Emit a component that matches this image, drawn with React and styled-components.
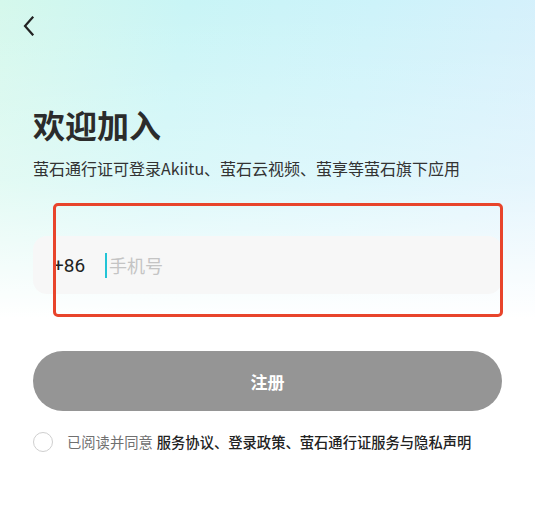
import React, { useState } from 'react';
import styled, { createGlobalStyle } from 'styled-components';

const GlobalStyle = createGlobalStyle`
  html, body {
    margin: 0;
    padding: 0;
    background: #ffffff;
  }
  body {
    font-family: "Noto Sans CJK SC", "Noto Sans", sans-serif;
  }
`;

const Page = styled.div`
  position: relative;
  width: 535px;
  height: 514px;
  overflow: hidden;
  background:
    linear-gradient(180deg, rgba(255, 255, 255, 0) 0%, rgba(255, 255, 255, 0.35) 35%, #ffffff 62%),
    linear-gradient(100deg, #d5f8ec 0%, #c9f5f6 30%, #cdf3fa 60%, #d9effc 100%);
`;

const TopBar = styled.div`
  height: 52px;
  display: flex;
  align-items: center;
  padding-left: 19px;
`;

const BackButton = styled.button`
  width: 20px;
  height: 24px;
  padding: 0;
  border: none;
  background: none;
  display: flex;
  align-items: center;
  justify-content: center;
  cursor: pointer;
`;

const Content = styled.div`
  padding: 0 33px;
`;

const Title = styled.h1`
  margin: 51px 0 0;
  font-size: 32px;
  line-height: 42px;
  font-weight: 700;
  color: #2b2b2b;
`;

const Subtitle = styled.p`
  margin: 12px 0 0;
  font-size: 16px;
  line-height: 22px;
  color: #333333;
`;

const FieldWrap = styled.div`
  position: relative;
  margin-top: 57px;
`;

const Field = styled.div`
  height: 58px;
  border-radius: 14px;
  background: #f7f7f7;
  display: flex;
  align-items: center;
  padding-left: 20px;
`;

const Prefix = styled.span`
  font-family: "Roboto", "Noto Sans", sans-serif;
  font-size: 19px;
  color: #222222;
  width: 52px;
`;

const Caret = styled.span`
  width: 2px;
  height: 25px;
  background: #22c4d6;
  margin-right: 2px;
`;

const Placeholder = styled.span`
  font-size: 18px;
  color: #c4c4c4;
`;

const Highlight = styled.div`
  position: absolute;
  left: 20px;
  right: -1px;
  top: -33px;
  bottom: -23px;
  border: 3px solid #e8442b;
  border-radius: 5px;
  pointer-events: none;
`;

const SubmitButton = styled.button`
  display: block;
  width: 100%;
  height: 60px;
  margin-top: 57px;
  border: none;
  border-radius: 30px;
  background: #959595;
  color: #ffffff;
  font-family: inherit;
  font-size: 17px;
  font-weight: 700;
  cursor: pointer;
`;

const Agreement = styled.label`
  display: flex;
  align-items: center;
  margin-top: 20px;
  font-size: 14.3px;
  color: #707070;
  cursor: pointer;
`;

const Radio = styled.span`
  width: 18px;
  height: 18px;
  border-radius: 50%;
  border: 1.5px solid ${(props) => (props.checked ? '#22c4d6' : '#cfcfcf')};
  background: ${(props) => (props.checked ? '#22c4d6' : 'transparent')};
  margin-right: 14px;
  flex-shrink: 0;
`;

const Terms = styled.span`
  color: #222222;
  font-weight: 500;
  margin-left: 4px;
`;

export default function App() {
  const [checked, setChecked] = useState(false);

  return (
    <>
      <GlobalStyle />
      <Page>
        <TopBar>
          <BackButton aria-label="返回">
            <svg width="12" height="20" viewBox="0 0 12 20" fill="none">
              <path d="M9.5 1.5 L2 10 L9.5 18.5" stroke="#222" strokeWidth="2.2" strokeLinecap="square" />
            </svg>
          </BackButton>
        </TopBar>
        <Content>
          <Title>欢迎加入</Title>
          <Subtitle>萤石通行证可登录Akiitu、萤石云视频、萤享等萤石旗下应用</Subtitle>
          <FieldWrap>
            <Field>
              <Prefix>+86</Prefix>
              <Caret />
              <Placeholder>手机号</Placeholder>
            </Field>
            <Highlight />
          </FieldWrap>
          <SubmitButton>注册</SubmitButton>
          <Agreement onClick={() => setChecked(!checked)}>
            <Radio checked={checked} />
            已阅读并同意
            <Terms>服务协议、登录政策、萤石通行证服务与隐私声明</Terms>
          </Agreement>
        </Content>
      </Page>
    </>
  );
}
